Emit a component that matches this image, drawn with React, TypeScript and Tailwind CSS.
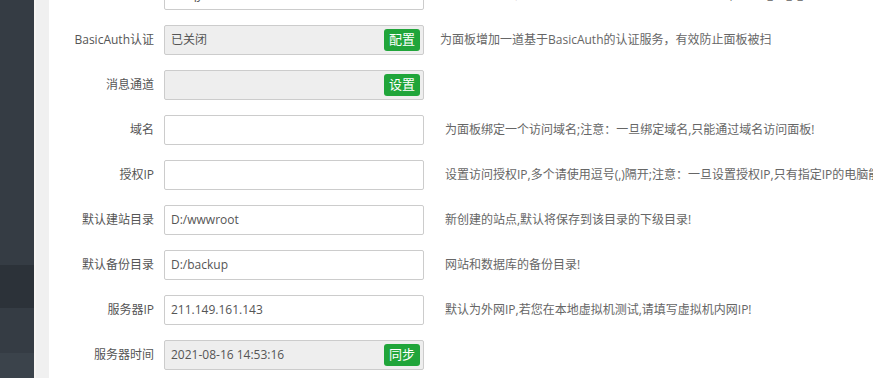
import React from "react";

type Row = {
  label: string;
  value?: string;
  disabled?: boolean;
  button?: string;
  desc?: string;
  descGap: string;
};

const rows: Row[] = [
  {
    label: "安全入口",
    value: "/anqy",
    desc: "面板管理入口，设置后只能通过指定安全入口登录面板,如: /bt_x    /_s_",
    descGap: "ml-[18px]",
  },
  {
    label: "BasicAuth认证",
    value: "已关闭",
    disabled: true,
    button: "配置",
    desc: "为面板增加一道基于BasicAuth的认证服务，有效防止面板被扫",
    descGap: "ml-[16px]",
  },
  { label: "消息通道", value: "", disabled: true, button: "设置", descGap: "ml-[21px]" },
  {
    label: "域名",
    value: "",
    desc: "为面板绑定一个访问域名;注意：一旦绑定域名,只能通过域名访问面板!",
    descGap: "ml-[21px]",
  },
  {
    label: "授权IP",
    value: "",
    desc: "设置访问授权IP,多个请使用逗号(,)隔开;注意：一旦设置授权IP,只有指定IP的电脑能访问面板!",
    descGap: "ml-[21px]",
  },
  {
    label: "默认建站目录",
    value: "D:/wwwroot",
    desc: "新创建的站点,默认将保存到该目录的下级目录!",
    descGap: "ml-[21px]",
  },
  {
    label: "默认备份目录",
    value: "D:/backup",
    desc: "网站和数据库的备份目录!",
    descGap: "ml-[21px]",
  },
  {
    label: "服务器IP",
    value: "211.149.161.143",
    desc: "默认为外网IP,若您在本地虚拟机测试,请填写虚拟机内网IP!",
    descGap: "ml-[21px]",
  },
  {
    label: "服务器时间",
    value: "2021-08-16 14:53:16",
    disabled: true,
    button: "同步",
    descGap: "ml-[21px]",
  },
];

function FormRow({ row }: { row: Row }) {
  return (
    <div className="mb-[15px] flex h-[30px] items-center whitespace-nowrap">
      <div className="w-[105px] shrink-0 text-right text-[12px] text-[#555]">{row.label}</div>
      <div
        className={`relative ml-[10px] flex h-[30px] w-[260px] shrink-0 items-center rounded-[2px] border border-[#ccc] px-[6px] text-[12px] text-[#555] ${
          row.disabled ? "bg-[#eee]" : "bg-white"
        }`}
      >
        {row.value}
        {row.button && (
          <span className="absolute top-[3px] right-[3px] flex h-[22px] w-[36px] items-center justify-center rounded-[3px] bg-[#20a53a] text-[13px] text-white">
            {row.button}
          </span>
        )}
      </div>
      {row.desc && (
        <div className={`${row.descGap} shrink-0 text-[12px] text-[#666]`}>{row.desc}</div>
      )}
    </div>
  );
}

export default function App() {
  return (
    <div
      className="flex h-[378px] w-[873px] overflow-hidden bg-white"
      style={{ fontFamily: '"Open Sans", "Noto Sans CJK SC", sans-serif' }}
    >
      <div className="flex w-[34px] shrink-0 flex-col bg-[#353c44]">
        <div className="h-[265px]" />
        <div className="h-[43px] bg-[#2c3239]" />
        <div className="h-[45px]" />
        <div className="flex-1 bg-[#3b434b]" />
      </div>
      <div className="w-[15px] shrink-0 border-l-2 border-[#f6f4f2] bg-[#f0f0f0]" />
      <div className="min-w-0 flex-1 overflow-hidden">
        <div className="-mt-[20px]">
          {rows.map((r) => (
            <FormRow key={r.label} row={r} />
          ))}
        </div>
      </div>
    </div>
  );
}
